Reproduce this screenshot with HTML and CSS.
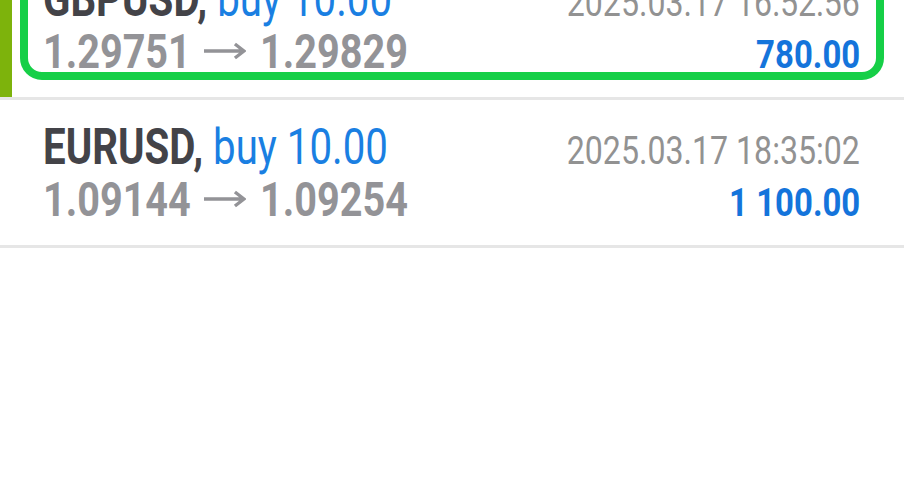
FILE: index.html
```html
<!DOCTYPE html>
<html>
<head>
<meta charset="utf-8">
<link rel="stylesheet" href="styles.css">
</head>
<body>
<div class="list">
  <div class="row selected">
    <div class="line line-top">
      <span class="cond left head"><b class="sym">GBPUSD,</b> <span class="dir">buy 10.00</span></span>
      <span class="cond right date">2025.03.17 16:52:56</span>
    </div>
    <div class="line line-bottom">
      <span class="cond left price">1.29751<svg class="arrow" viewBox="0 0 42 18" preserveAspectRatio="none" aria-label="→"><path d="M0 9H40M31 2L40 9L31 16" fill="none" stroke="#939397" stroke-width="3.4" stroke-linejoin="miter"/></svg>1.29829</span>
      <span class="cond right profit">780.00</span>
    </div>
  </div>
  <div class="row">
    <div class="line line-top">
      <span class="cond left head"><b class="sym">EURUSD,</b> <span class="dir">buy 10.00</span></span>
      <span class="cond right date">2025.03.17 18:35:02</span>
    </div>
    <div class="line line-bottom">
      <span class="cond left price">1.09144<svg class="arrow" viewBox="0 0 42 18" preserveAspectRatio="none" aria-label="→"><path d="M0 9H40M31 2L40 9L31 16" fill="none" stroke="#939397" stroke-width="3.4" stroke-linejoin="miter"/></svg>1.09254</span>
      <span class="cond right profit">1 100.00</span>
    </div>
  </div>
</div>
</body>
</html>
```
FILE: styles.css
```css
html, body {
  margin: 0;
  padding: 0;
  background: #ffffff;
}
body {
  font-family: Roboto, "Liberation Sans", sans-serif;
  width: 904px;
  height: 480px;
  overflow: hidden;
}
.list {
  margin-top: -48px;
}
.row {
  position: relative;
  box-sizing: border-box;
  height: 148px;
  padding: 21px 44px 0 43px;
  border-bottom: 3px solid #e6e6e6;
}
.selected::before {
  content: "";
  position: absolute;
  left: 0;
  top: 0;
  bottom: 0;
  width: 12px;
  background: #7db30c;
}
.selected::after {
  content: "";
  position: absolute;
  left: 20px;
  right: 20px;
  top: 17px;
  bottom: 17px;
  border: 8px solid #16cf47;
  border-radius: 22px;
}
.line {
  display: flex;
  justify-content: space-between;
  align-items: baseline;
  white-space: nowrap;
}
.line-top {
  font-size: 50px;
  line-height: 52px;
}
.line-bottom {
  font-size: 48px;
  line-height: 46px;
}
.cond {
  display: inline-block;
  transform: scaleX(0.845);
}
.head {
  transform: scaleX(0.805);
}
.price {
  transform: scaleX(0.825);
}
.left {
  transform-origin: left center;
}
.right {
  transform-origin: right center;
}
.sym {
  font-weight: 700;
  color: #434348;
}
.dir {
  font-weight: 400;
  color: #1a7fe2;
}
.price {
  font-weight: 700;
  color: #939397;
}
.arrow {
  display: inline-block;
  width: 51px;
  height: 18px;
  margin: 0 17px 0 16px;
  vertical-align: 8px;
}
.date {
  font-size: 38px;
  font-weight: 400;
  color: #929292;
}
.profit {
  font-size: 39px;
  font-weight: 700;
  color: #1474db;
}
```
